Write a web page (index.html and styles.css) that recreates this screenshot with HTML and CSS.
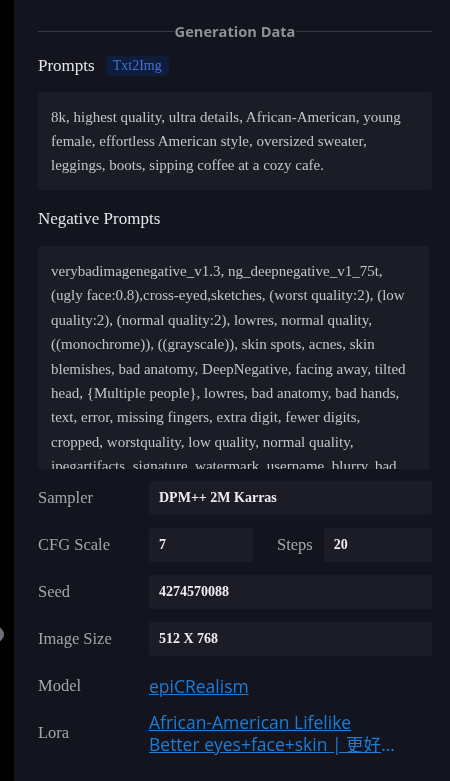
FILE: index.html
```html
<!DOCTYPE html>
<html>
<head>
<meta charset="utf-8">
<link rel="stylesheet" href="styles.css">
</head>
<body>
<div class="strip"></div>
<div class="knob"></div>
<main class="panel">
  <div class="divider"><span class="divider-title">Generation Data</span></div>

  <div class="section-head">
    <span class="section-title">Prompts</span>
    <span class="badge">Txt2Img</span>
  </div>
  <div class="textbox">8k, highest quality, ultra details, African-American, young female, effortless American style, oversized sweater, leggings, boots, sipping coffee at a cozy cafe.</div>

  <div class="section-head neg-head">
    <span class="section-title">Negative Prompts</span>
  </div>
  <div class="textbox scroll">verybadimagenegative_v1.3, ng_deepnegative_v1_75t, (ugly face:0.8),cross-eyed,sketches, (worst quality:2), (low quality:2), (normal quality:2), lowres, normal quality, ((monochrome)), ((grayscale)), skin spots, acnes, skin blemishes, bad anatomy, DeepNegative, facing away, tilted head, {Multiple people}, lowres, bad anatomy, bad hands, text, error, missing fingers, extra digit, fewer digits, cropped, worstquality, low quality, normal quality, jpegartifacts, signature, watermark, username, blurry, bad feet, cropped, poorly drawn hands, poorly drawn face, mutation, deformed, worst quality, low quality, normal quality, jpeg artifacts, signature, watermark, extra fingers, fewer digits, extra limbs, extra arms,extra legs, malformed limbs, fused fingers, too many fingers, long neck, cross-eyed, mutated hands, polar lowres, bad body, bad proportions, gross proportions</div>

  <div class="params">
    <div class="row">
      <span class="label">Sampler</span>
      <span class="value">DPM++ 2M Karras</span>
    </div>
    <div class="row">
      <span class="label">CFG Scale</span>
      <span class="value small">7</span>
      <span class="label inline">Steps</span>
      <span class="value">20</span>
    </div>
    <div class="row">
      <span class="label">Seed</span>
      <span class="value">4274570088</span>
    </div>
    <div class="row">
      <span class="label">Image Size</span>
      <span class="value">512 X 768</span>
    </div>
    <div class="row link-row">
      <span class="label">Model</span>
      <a class="link" href="#">epiCRealism</a>
    </div>
    <div class="row link-row lora">
      <span class="label">Lora</span>
      <a class="link clamp" href="#">African-American Lifelike Better eyes+face+skin | 更好的眼睛+脸+皮肤</a>
    </div>
  </div>
</main>
</body>
</html>
```

FILE: styles.css
```css
* { box-sizing: border-box; }
html, body { margin: 0; padding: 0; }
body {
  background: #000;
  display: flex;
  min-height: 781px;
  overflow: hidden;
  font-family: "Liberation Serif", "Times New Roman", serif;
}
.strip { width: 14px; flex: none; background: #000; }
.knob {
  position: absolute;
  left: -11px; top: 627px;
  width: 15px; height: 15px;
  border-radius: 50%;
  background: #6f7076;
}
.panel {
  flex: 1;
  background: #13141e;
  padding: 21px 18px 0 24px;
}
.divider {
  display: flex;
  align-items: center;
  height: 20px;
}
.divider::before, .divider::after {
  content: "";
  flex: 1;
  height: 1px;
  background: #393a43;
}
.divider-title {
  font-family: "Open Sans", "Noto Sans", sans-serif;
  font-weight: 700;
  font-size: 14.6px;
  color: #8f9199;
  padding: 0 1px;
}
.section-head {
  display: flex;
  align-items: center;
  gap: 11px;
  margin-top: 14px;
  height: 22px;
}
.section-title {
  font-size: 17px;
  color: #e4e5ea;
}
.badge {
  font-size: 14px;
  color: #3f74d4;
  background: #0f1c3c;
  border-radius: 4px;
  padding: 1px 7px 2px;
  line-height: 17px;
}
.textbox {
  margin-top: 15px;
  background: #1b1c26;
  border-radius: 4px;
  padding: 13px 13px 13px;
  font-size: 15px;
  line-height: 24px;
  color: #c3c4ca;
}
.neg-head { margin-top: 18px; }
.textbox.scroll {
  margin-top: 16px;
  margin-right: 3px;
  height: 223px;
  overflow-y: scroll;
  padding-right: 15px;
  line-height: 24.4px;
  border-radius: 4px 0 0 4px;
}
.textbox.scroll::-webkit-scrollbar { width: 7px; background: #0c0d18; }
.textbox.scroll::-webkit-scrollbar-thumb { background: #0c0d18; }
.params {
  display: flex;
  flex-direction: column;
  gap: 13px;
  margin-top: 12px;
}
.row {
  display: flex;
  align-items: center;
  height: 34px;
}
.label {
  width: 111px;
  flex: none;
  font-size: 16.5px;
  color: #a4a5ac;
}
.label.inline { width: auto; margin: 0 11px 0 24px; }
.value {
  flex: 1;
  height: 34px;
  display: flex;
  align-items: center;
  background: #1b1c26;
  border-radius: 2px;
  padding: 0 10px;
  font-weight: 700;
  font-size: 14px;
  color: #ececf0;
}
.value.small { flex: none; width: 104px; }
.link-row { height: 34px; }
.link {
  font-family: "Open Sans", "Noto Sans", "Noto Sans CJK SC", sans-serif;
  font-size: 17.5px;
  line-height: 22px;
  color: #1c7ed6;
  text-decoration: underline;
}
.lora { height: 46px; margin-top: -6px; }
.clamp {
  display: -webkit-box;
  -webkit-line-clamp: 2;
  -webkit-box-orient: vertical;
  overflow: hidden;
  flex: 1;
  padding-right: 30px;
}
```
